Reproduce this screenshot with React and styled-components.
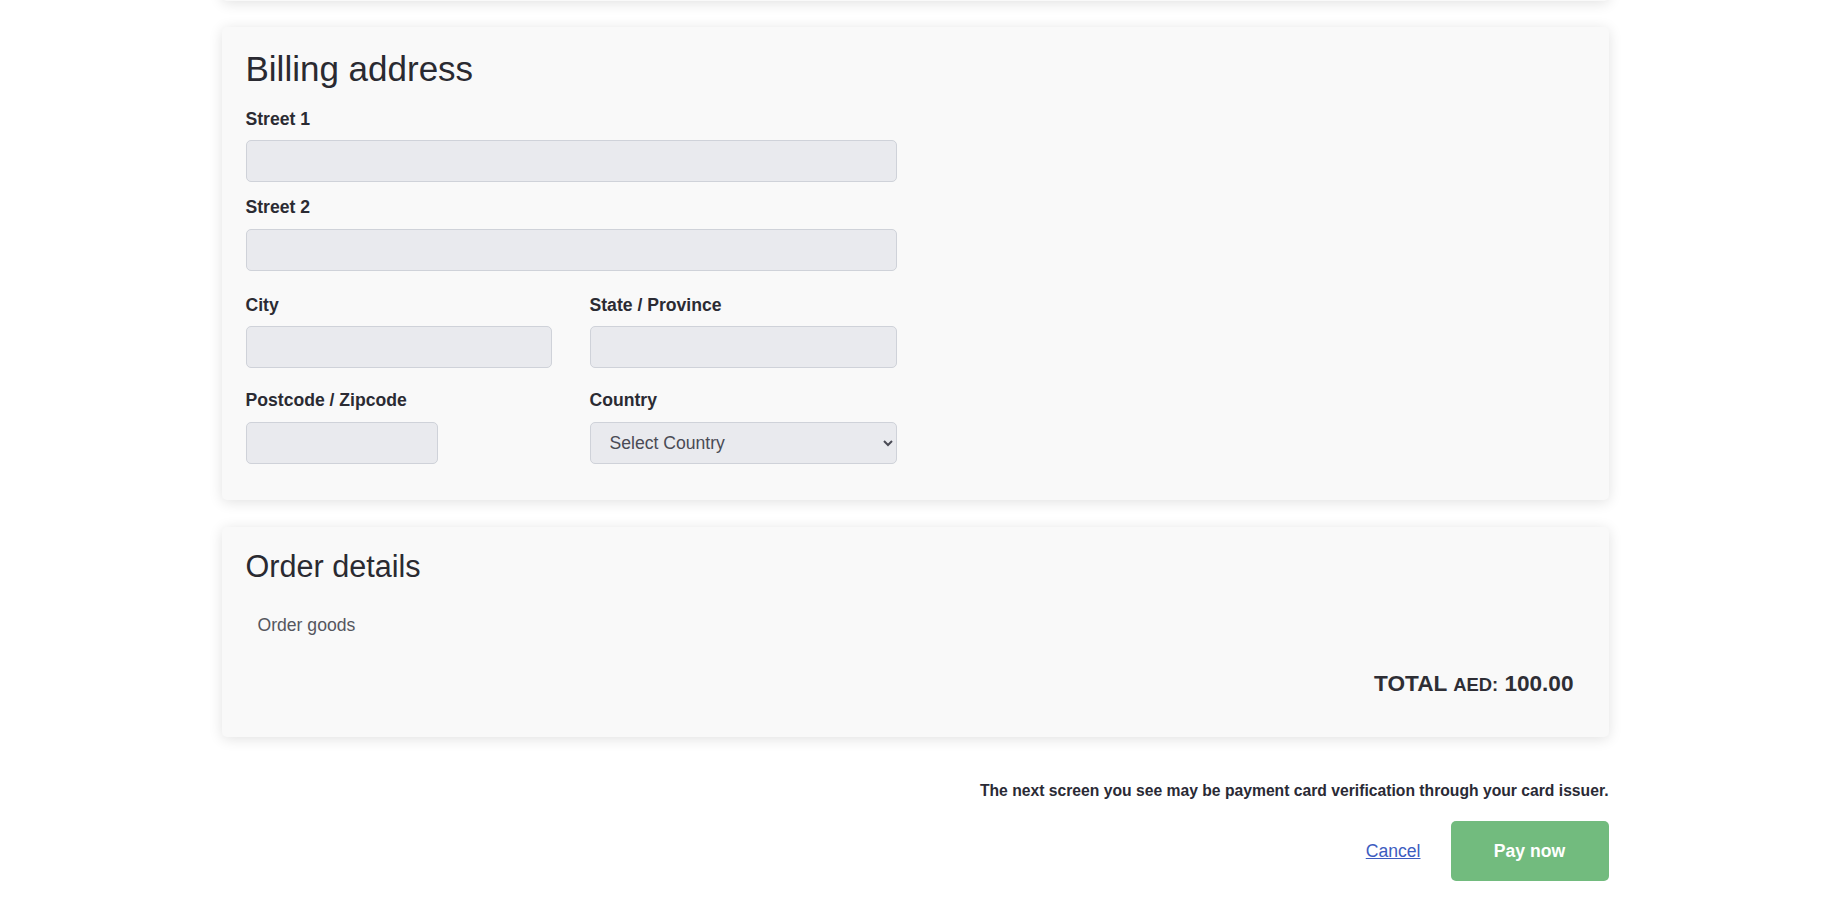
import React from "react";
import styled, { createGlobalStyle } from "styled-components";

const GlobalStyle = createGlobalStyle`
  html, body {
    margin: 0;
    padding: 0;
    background: #ffffff;
    font-family: "Liberation Sans", Arial, sans-serif;
    color: #2b2b33;
  }
  * {
    box-sizing: border-box;
  }
`;

const Page = styled.div`
  width: 1387px;
  margin-left: calc(50% - 692px);
  display: flex;
  flex-direction: column;
  gap: ${p => p.gap || 0}px;
`;

const Card = styled.section`
  background: #f9f9f9;
  border-radius: 5px;
  box-shadow: 0 2px 14px rgba(0, 0, 0, 0.12);
  padding: 21px 24px 24px;
`;

// the card above this section, scrolled out of view
const PrevCard = styled(Card)`
  height: 100px;
  margin-top: -99px;
`;

const OrderCard = styled(Card)`
  margin-top: 1px;
`;

const Heading = styled.h2`
  margin: 0 0 16px;
  font-size: ${p => p.size || 35}px;
  font-weight: 400;
  line-height: 1.2;
  color: #2a2a31;
`;

const Form = styled.div`
  width: 651px;
  margin-bottom: 12px;
`;

const Field = styled.div`
  margin-bottom: ${p => (p.last ? 0 : 12)}px;
`;

const Label = styled.label`
  display: block;
  font-size: 17.6px;
  font-weight: 700;
  line-height: 1.5;
  margin-bottom: 8px;
  color: #2b2b33;
`;

const Input = styled.input`
  display: block;
  width: ${p => p.width || "100%"};
  height: 42px;
  background: #e9eaee;
  border: 1px solid #cfd2d9;
  border-radius: 5px;
  padding: 0 18px;
  font-family: inherit;
  font-size: 17.6px;
  color: #2b2b33;
  outline: none;
`;

const Select = styled.select`
  display: block;
  width: 100%;
  height: 42px;
  background: #e9eaee;
  border: 1px solid #cfd2d9;
  border-radius: 5px;
  padding: 0 12px 0 15px;
  font-family: inherit;
  font-size: 17.6px;
  color: #4a4b55;
  outline: none;
`;

const Grid = styled.div`
  display: grid;
  grid-template-columns: 306px 307px;
  column-gap: 38px;
  row-gap: 19px;
  margin-top: 21px;
`;

const Goods = styled.div`
  padding: 12px 12px 0;
  font-size: 17.6px;
  line-height: 1.5;
  color: #55565e;
`;

const TotalRow = styled.div`
  text-align: right;
  padding: 28px 11px 0;
  margin-bottom: 12px;
  font-size: 22.6px;
  font-weight: 700;
  line-height: 1.5;
  color: #2e2e35;
`;

const Currency = styled.span`
  font-size: 18.4px;
`;

const Footer = styled.div`
  display: flex;
  flex-direction: column;
  align-items: flex-end;
  padding-top: 42px;
`;

const Notice = styled.p`
  margin: 0 0 19px;
  font-size: 15.7px;
  font-weight: 700;
  line-height: 1.5;
  color: #2a2a35;
`;

const Actions = styled.div`
  display: flex;
  align-items: center;
  gap: 30px;
`;

const CancelLink = styled.a`
  font-size: 17.6px;
  line-height: 1.5;
  color: #3d5cc0;
  text-decoration: underline;
  cursor: pointer;
`;

const PayButton = styled.button`
  width: 158px;
  height: 60px;
  border: none;
  border-radius: 5px;
  background: #72bb7e;
  color: #ffffff;
  font-family: inherit;
  font-size: 17.6px;
  font-weight: 700;
  cursor: pointer;
`;

function TextField({ label, width, last }) {
  return (
    <Field last={last}>
      <Label>{label}</Label>
      <Input type="text" width={width} />
    </Field>
  );
}

export default function App() {
  return (
    <>
      <GlobalStyle />
      <Page gap={26}>
        <PrevCard />

        <Card>
          <Heading>Billing address</Heading>
          <Form>
            <TextField label="Street 1" />
            <TextField label="Street 2" last />
            <Grid>
              <TextField label="City" last />
              <TextField label="State / Province" last />
              <TextField label="Postcode / Zipcode" width="192px" last />
              <Field last>
                <Label>Country</Label>
                <Select defaultValue="">
                  <option value="">Select Country</option>
                  <option value="AE">United Arab Emirates</option>
                </Select>
              </Field>
            </Grid>
          </Form>
        </Card>

        <OrderCard>
          <Heading size={30.6}>Order details</Heading>
          <Goods>Order goods</Goods>
          <TotalRow>
            TOTAL <Currency>AED:</Currency> 100.00
          </TotalRow>
        </OrderCard>
      </Page>

      <Page>
        <Footer>
          <Notice>
            The next screen you see may be payment card verification through your card issuer.
          </Notice>
          <Actions>
            <CancelLink>Cancel</CancelLink>
            <PayButton>Pay now</PayButton>
          </Actions>
        </Footer>
      </Page>
    </>
  );
}
